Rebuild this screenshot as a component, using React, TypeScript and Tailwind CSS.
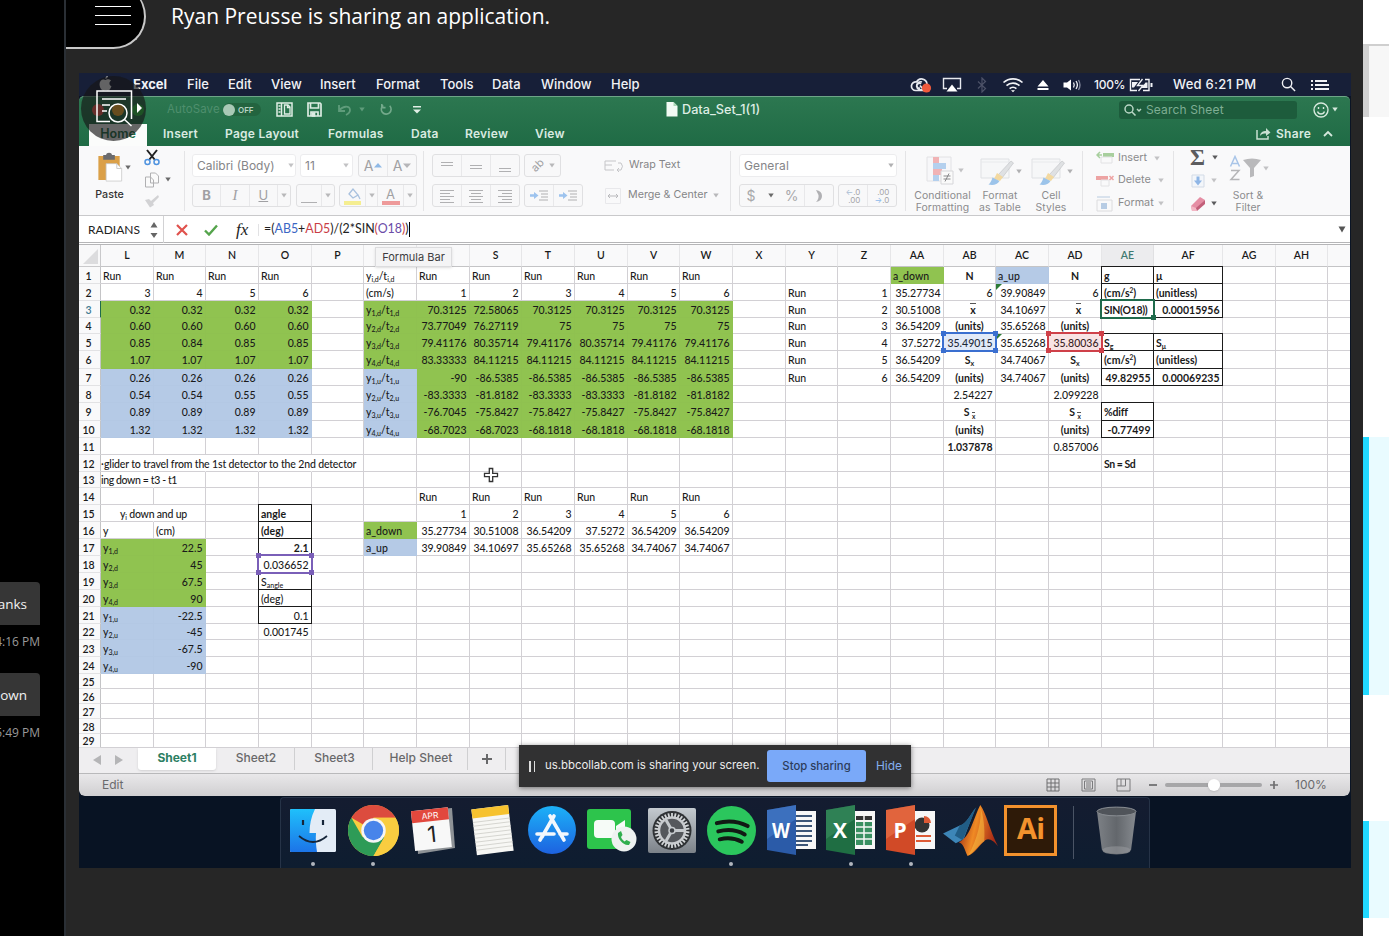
import React from "react";
import type { ReactNode } from "react";

/* ---------- small building blocks ---------- */

const Caret = ({ className = "text-[#8a8a8a]" }: { className?: string }) => (
  <svg viewBox="0 0 6 5" className={"h-[5px] w-[6px] shrink-0 " + className} fill="currentColor">
    <path d="M0.3 0.5h5.4L3 4.6z" />
  </svg>
);

const Gap = ({ className }: { className: string }) => <div className={"shrink-0 " + className} />;

/* ---------- menu bar ---------- */

const menuItems: [string, string][] = [
  ["File", "w-[41px]"],
  ["Edit", "w-[43px]"],
  ["View", "w-[49px]"],
  ["Insert", "w-[56px]"],
  ["Format", "w-[64px]"],
  ["Tools", "w-[52px]"],
  ["Data", "w-[49px]"],
  ["Window", "w-[70px]"],
  ["Help", "w-[40px]"],
];

function MenuBar() {
  return (
    <div className="flex h-[23px] shrink-0 items-center bg-[#171f38] pl-5 text-[13px] font-medium text-[#f1f2f6]">
      <svg viewBox="0 0 14 16" className="mb-[2px] h-[15px] w-[13px] shrink-0" fill="#f4f4f6">
        <path d="M9.5 0c.1 1.500-1.200 3-2.700 3C6.700 1.600 8 .2 9.500 0zM7 4.200c.8 0 1.500-.7 2.900-.7 1.300 0 2.400.6 3 1.600-2.500 1.500-2 4.900.5 5.900-.6 1.700-2 4.500-3.600 4.500-1 0-1.400-.6-2.700-.6s-1.700.6-2.700.6C2.600 15.500.6 12 .6 8.900.6 5.500 2.700 3.600 4.700 3.600c1.100 0 1.700.6 2.300.6z" />
      </svg>
      <span className="ml-[21px] w-[54px] shrink-0 font-bold">Excel</span>
      {menuItems.map(([t, w]) => (
        <span key={t} className={"shrink-0 whitespace-nowrap " + w}>{t}</span>
      ))}
      <div className="flex-1" />
      <svg viewBox="0 0 22 16" className="h-4 w-[22px] shrink-0" fill="none" stroke="#e6e8ee" strokeWidth="1.700">
        <path d="M6 13.500h9M6 13.500a4.300 4.300 0 1 1 .6-8.500A5.500 5.500 0 0 1 17 7" />
        <path d="M10 11a2.400 2.400 0 1 1 1-4M10 8.500l2 2.500M12 5a4 4 0 1 0 1 7" />
        <circle cx="16.500" cy="11" r="4.600" fill="#f05a3c" stroke="none" />
      </svg>
      <svg viewBox="0 0 20 16" className="ml-[10px] h-4 w-5 shrink-0" fill="none" stroke="#e6e8ee" strokeWidth="1.400">
        <path d="M5 11.500H1.500v-10h17v10H15" />
        <path d="M10 7.500l5.500 7h-11z" fill="#fff" stroke="none" />
      </svg>
      <svg viewBox="0 0 10 16" className="ml-[15px] h-4 w-[10px] shrink-0" fill="none" stroke="#4d5268" strokeWidth="1.200">
        <path d="M1 4.500l7.500 7L5 15V1l3.500 3.500L1 11.500" />
      </svg>
      <svg viewBox="0 0 22 16" className="ml-[15px] h-4 w-[22px] shrink-0" fill="none" stroke="#f1f2f6" strokeWidth="1.700">
        <path d="M1.500 5.500a14 14 0 0 1 19 0M4.500 8.700a9.500 9.500 0 0 1 13 0M7.600 11.600a5 5 0 0 1 6.800 0" />
        <path d="M9 13.200h4l-2 2z" fill="#fff" stroke="none" />
      </svg>
      <svg viewBox="0 0 12 12" className="ml-[13px] h-3 w-3 shrink-0" fill="#fff">
        <path d="M6 1l5.500 6.500H.5zM.5 9h11v2H.5z" />
      </svg>
      <svg viewBox="0 0 18 14" className="ml-[14px] h-[14px] w-[18px] shrink-0" fill="none" stroke="#f1f2f6" strokeWidth="1.300">
        <path d="M0.500 4.500h3.500L8 1.500v11L4 9.500H.5z" fill="#fff" stroke="none" />
        <path d="M10.500 4.500q1.500 2.500 0 5M13 3q2.800 4 0 8" />
        <path d="M15.500 2q3 5 0 10" stroke="#878ca0" />
      </svg>
      <span className="ml-[13px] w-[35px] text-[12px] tracking-[-0.3px]">100%</span>
      <svg viewBox="0 0 24 14" className="h-[14px] w-6 shrink-0" fill="none" stroke="#f1f2f6" strokeWidth="1.400">
        <path d="M11 1.500H1.500v11H8M14 12.500h6v-11h-4" />
        <path d="M22.500 5v4" strokeWidth="2" />
        <path d="M3 4h6L5 9.500H3zM18.500 10h-6l4-5.500h2z" fill="#f1f2f6" stroke="none" />
        <path d="M13.500 1L8.500 7.500h5.500L9.500 13" strokeWidth="1.300" />
      </svg>
      <span className="ml-5 w-[108px] whitespace-nowrap text-[13px] tracking-[0.25px]">Wed 6:21 PM</span>
      <svg viewBox="0 0 16 16" className="h-[15px] w-[15px] shrink-0" fill="none" stroke="#f1f2f6" strokeWidth="1.500">
        <circle cx="6.500" cy="6.500" r="5" />
        <path d="M10.200 10.200L15 15" />
      </svg>
      <svg viewBox="0 0 18 12" className="ml-[15px] mr-[22px] h-3 w-[18px] shrink-0" fill="#f1f2f6">
        <path d="M0 1h2v2H0zM0 5h2v2H0zM0 9h2v2H0zM4 1h12v2H4zM4 5h14v2H4zM4 9h14v2H4z" />
      </svg>
    </div>
  );
}

/* ---------- title bar and ribbon tabs ---------- */

const tabs: [string, string][] = [
  ["Insert", "w-[62px]"],
  ["Page Layout", "w-[103px]"],
  ["Formulas", "w-[83px]"],
  ["Data", "w-[54px]"],
  ["Review", "w-[70px]"],
  ["View", "w-[40px]"],
];

function TitleBar() {
  return (
    <div className="flex h-[50px] shrink-0 flex-col rounded-t-[5px] border-t border-[#6da587] bg-gradient-to-b from-[#2c7750] to-[#1f6b45]">
      <div className="flex h-[25px] items-center pl-[13px]">
        <div className="flex w-[75px] gap-2">
          <div className="size-3 rounded-full bg-[#ff5a50]" />
          <div className="size-3 rounded-full bg-[#ffb52e]" />
          <div className="size-3 rounded-full bg-[#2bc440]" />
        </div>
        <span className="w-[56px] text-[11.500px] tracking-[0.1px] text-[#4f8f6d]">AutoSave</span>
        <div className="flex h-[13px] w-[38px] items-center rounded-full bg-[#23643f]">
          <div className="size-3 rounded-full bg-[#a9c9b6]" />
          <span className="ml-[3px] text-[8px] font-semibold text-[#b9d3c4]">OFF</span>
        </div>
        <svg viewBox="0 0 17 15" className="ml-[15px] h-[15px] w-[17px]" fill="none" stroke="#e1efe6" strokeWidth="1.500">
          <path d="M1 1h15v13H1zM5.500 1v13" />
          <path d="M8.500 3h3.500l2 2v7H8.500zM11.500 3v2.500H14" strokeWidth="1.300" />
          <path d="M2.500 4h2M2.500 7h2M2.500 10h2" />
        </svg>
        <svg viewBox="0 0 15 15" className="ml-[14px] h-[15px] w-[15px]" fill="none" stroke="#dcebe2" strokeWidth="1.700">
          <path d="M1 1h12l1 1v12H1zM3.500 1v5h8V1M4 14v-4h7v4" />
          <path d="M5.500 11h2v3h-2z" fill="#dcebe2" />
        </svg>
        <svg viewBox="0 0 16 12" className="ml-[15px] h-3 w-4" fill="none" stroke="#5f9c7b" strokeWidth="1.800">
          <path d="M2 1v6h6M2 7c3-5 11-6 11-1 0 2-2 4-4 5" />
        </svg>
        <Caret className="ml-[6px] text-[#5f9c7b]" />
        <svg viewBox="0 0 14 14" className="ml-[14px] h-[13px] w-[14px]" fill="none" stroke="#73a98b" strokeWidth="1.700">
          <path d="M11 3A5.300 5.300 0 1 1 4 2.500M2.500 1v4h4" />
        </svg>
        <svg viewBox="0 0 8 8" className="ml-[20px] h-2 w-2" fill="#e1efe6">
          <path d="M0 0h8v1.500H0zM0 3.500h8L4 7.500z" />
        </svg>
        <svg viewBox="0 0 12 15" className="ml-[245px] h-[15px] w-3">
          <path d="M0.500 0h7L11.500 4v10.500H.5z" fill="#f2fbf4" />
          <path d="M7.500 0v4h4z" fill="#a9d8b6" />
        </svg>
        <span className="ml-[4px] w-[90px] text-[12.700px] font-medium text-[#deede4]">Data_Set_1(1)</span>
        <div className="flex-1" />
        <div className="flex h-[18px] w-[178px] items-center rounded-[3px] bg-[#1d5c3c] pl-[5px]">
          <svg viewBox="0 0 18 12" className="h-3 w-[18px]" fill="none" stroke="#b9d6c5" strokeWidth="1.500">
            <circle cx="5" cy="5" r="4" />
            <path d="M8 8l3.500 3.500M13 5l2 2 2-2" />
          </svg>
          <span className="ml-1 text-[12px] tracking-[0.15px] text-[#7fae94]">Search Sheet</span>
        </div>
        <svg viewBox="0 0 16 16" className="ml-4 h-4 w-4" fill="none" stroke="#d5e8dc" strokeWidth="1.400">
          <circle cx="8" cy="8" r="7" />
          <path d="M4.500 9.500a3.700 3.700 0 0 0 7 0M5.500 5v2M10.500 5v2" />
        </svg>
        <Caret className="ml-[3px] mr-[12px] text-[#d5e8dc]" />
      </div>
      <div className="flex h-[24px] items-center pb-px pl-[10px] text-[12px] font-semibold text-[#d9eae0]">
        <div className="-mb-px mr-[16px] flex h-[22px] w-[58px] items-center justify-center self-end bg-[#fbfcfb] pb-[2px] text-[12.500px] text-[#237049]">Home</div>
        {tabs.map(([t, w]) => (
          <span key={t} className={"shrink-0 whitespace-nowrap tracking-[0.25px] " + w}>{t}</span>
        ))}
        <div className="flex-1" />
        <svg viewBox="0 0 15 13" className="h-[13px] w-[15px]" fill="none" stroke="#c9e0d2" strokeWidth="1.500">
          <path d="M1 3v9h11V9" />
          <path d="M4 9c.5-4 3-5 6-5V1l4.500 4.500L10 9V6.500C7 6.500 5.500 7 4 9z" fill="#c9e0d2" stroke="none" />
        </svg>
        <span className="ml-[5px] w-[47px] tracking-[0.3px]">Share</span>
        <svg viewBox="0 0 10 7" className="mr-[17px] h-[7px] w-[10px]" fill="none" stroke="#d5e8dc" strokeWidth="1.800">
          <path d="M1 6l4-4 4 4" />
        </svg>
      </div>
    </div>
  );
}

/* ---------- ribbon ---------- */

const Box = ({ className, children }: { className: string; children?: ReactNode }) => (
  <div className={"flex h-[23px] shrink-0 items-center rounded-[3px] border border-[#e0e0e2] bg-[#f8f8f9] text-[#a0a0a3] " + className}>{children}</div>
);

const Part = ({ className = "flex-1", children }: { className?: string; children?: ReactNode }) => (
  <div className={"flex h-full items-center justify-center border-r border-[#e8e8ea] last:border-r-0 " + className}>{children}</div>
);

const Lines = ({ d, color = "#b0b0b2" }: { d: string; color?: string }) => (
  <svg viewBox="0 0 16 16" className="h-4 w-4" fill="none" stroke={color} strokeWidth="1"><path d={d} /></svg>
);

const Sep = () => <div className="h-[60px] w-px shrink-0 self-center bg-[#e4e4e6]" />;

const Rows = ({ className, children }: { className: string; children: ReactNode }) => (
  <div className={"flex shrink-0 flex-col gap-[7px] pt-2 " + className}>{children}</div>
);

function Brush() {
  return (
    <svg viewBox="0 0 34 30" className="h-[30px] w-[34px]" fill="none">
      <path d="M1 3h28v19H1z" fill="#f6f7f8" stroke="#dfe1e4" />
      <path d="M1 6h28" stroke="#e8eaec" />
      <path d="M31 5l2.500 2L22 22l-4-3z" fill="#dfe1e3" stroke="#c4c6c8" strokeWidth=".7" />
      <path d="M17 17l6 4-3 4-6-2z" fill="#f3d9a0" />
      <path d="M12.500 21.500l7 3.500c-2 4-7 4.500-11 3.500 2-1.500 3-4 4-7z" fill="#9cc4ea" />
    </svg>
  );
}

const IndentIcon = () => (
  <svg viewBox="0 0 20 14" className="h-[14px] w-5" fill="none" stroke="#b0b0b2">
    <path d="M10 2h9M12 5h7M12 8h7M10 11h9" />
    <path d="M1 6.500h6" stroke="#9dc3ee" strokeWidth="2.500" />
    <path d="M5 3l4.500 3.500L5 10z" fill="#9dc3ee" stroke="none" />
  </svg>
);

const StyleLabel = ({ a, b }: { a: string; b: string }) => (
  <div className="mt-[5px] whitespace-nowrap text-center text-[10.400px] leading-[12px] tracking-[0.1px] text-[#8b8b8d]">{a}<br />{b}</div>
);

function Ribbon() {
  return (
    <div className="flex h-[70px] shrink-0 border-b border-[#c9c9cb] bg-[#f9f9fa] font-[Inter,sans-serif]">
      {/* clipboard */}
      <div className="flex w-[105px] shrink-0 pl-3">
        <div className="flex w-[37px] flex-col items-center pt-[6px]">
          <svg viewBox="0 0 26 32" className="h-[31px] w-[26px]">
            <path d="M1 4h22v25H1z" fill="#dba048" />
            <path d="M6 3h3c0-3 6-3 6 0h3v5H6z" fill="#6b6b6d" />
            <path d="M9 12h11l5 5v13H9z" fill="#fff" stroke="#c8c8c8" strokeWidth=".8" />
            <path d="M20 12v5h5" fill="none" stroke="#c8c8c8" />
          </svg>
          <span className="mt-[5px] text-[10.700px] font-medium leading-[14px] text-[#333]">Paste</span>
        </div>
        <div className="-ml-[3px] pt-[19px]"><Caret className="text-[#6a6a6a]" /></div>
        <div className="ml-[13px] flex w-4 flex-col items-center gap-[6px] pt-[3px]">
          <svg viewBox="0 0 16 17" className="h-[17px] w-4" fill="none" strokeWidth="2">
            <path d="M3 1l8 10M13 1L5 11" stroke="#222" />
            <circle cx="3.500" cy="13" r="2.500" stroke="#4f93df" strokeWidth="1.500" />
            <circle cx="12.500" cy="13" r="2.500" stroke="#4f93df" strokeWidth="1.500" />
          </svg>
          <svg viewBox="0 0 16 16" className="h-4 w-4" fill="#fafafa" stroke="#b0b0b2">
            <path d="M6.500 1h5l3 3v7h-8zM1.500 5h5l3 3v7h-8z" />
          </svg>
          <svg viewBox="0 0 16 14" className="h-[14px] w-4" fill="#d2d2d4">
            <path d="M1 6l4-1 2 2 7-6 1 2-6 6 1 2-4 2.500z" />
          </svg>
        </div>
        <div className="ml-[5px] pt-[31px]"><Caret className="text-[#6a6a6a]" /></div>
      </div>
      <Sep />
      {/* font */}
      <Rows className="w-[238px] pl-[7px]">
        <div className="flex">
          <Box className="w-[104px] border-[#ececee] bg-white pl-1 text-[12px]"><span className="w-[91px] text-[#858588]">Calibri (Body)</span><Caret className="text-[#c2c2c4]" /></Box>
          <Box className="ml-1 w-[53px] border-[#ececee] bg-white pl-1 text-[12px]"><span className="w-[38px] text-[#858588]">11</span><Caret className="text-[#c2c2c4]" /></Box>
          <Box className="ml-[5px] w-[59px] text-[14px]">
            <Part>A
              <svg viewBox="0 0 8 5" className="ml-px h-[5px] w-2" fill="#8fb9e6"><path d="M0 4.500h8L4 0z" /></svg>
            </Part>
            <Part>A
              <svg viewBox="0 0 8 5" className="ml-px h-[5px] w-2" fill="#b6b6b9"><path d="M0 .5h8L4 5z" /></svg>
            </Part>
          </Box>
        </div>
        <div className="flex">
          <Box className="w-[99px] text-[13px]">
            <Part><b>B</b></Part>
            <Part><i className="font-['Liberation_Serif',serif] text-[15px]">I</i></Part>
            <Part><u>U</u></Part>
            <Part className="w-3"><Caret className="text-[#b8b8ba]" /></Part>
          </Box>
          <Box className="ml-[5px] w-[39px]">
            <Part><Lines d="M0 14.500h16" /></Part>
            <Part className="w-3"><Caret className="text-[#b8b8ba]" /></Part>
          </Box>
          <Box className="ml-1 w-[78px]">
            <Part>
              <svg viewBox="0 0 18 18" className="h-[18px] w-[18px]" fill="none">
                <path d="M5 7l4-5 5 6-5 3zM14 8l2 4" stroke="#a9c1de" strokeWidth="1.300" />
                <path d="M0 14h17v4H0z" fill="#f5ee91" />
              </svg>
            </Part>
            <Part className="w-3"><Caret className="text-[#b8b8ba]" /></Part>
            <Part>
              <div className="flex flex-col items-center"><span className="text-[13px] leading-[14px]">A</span><div className="h-1 w-[18px] bg-[#ee9a9a]" /></div>
            </Part>
            <Part className="w-3"><Caret className="text-[#b8b8ba]" /></Part>
          </Box>
        </div>
      </Rows>
      <Sep />
      {/* alignment */}
      <Rows className="w-[160px] pl-2">
        <div className="flex">
          <Box className="w-[88px]">
            <Part><Lines d="M2 4.500h12M2 7.500h12" /></Part>
            <Part><Lines d="M2 7.500h12M2 10.500h12" /></Part>
            <Part><Lines d="M2 10.500h12M2 13.500h12" /></Part>
          </Box>
          <Box className="ml-1 w-[37px]">
            <div className="flex w-6 items-center justify-center"><span className="-rotate-45 text-[11px]">ab</span></div><Caret className="text-[#b8b8ba]" />
          </Box>
        </div>
        <div className="flex">
          <Box className="w-[88px]">
            <Part><Lines d="M1 2.500h14M1 5.500h10M1 8.500h14M1 11.500h10M1 14.500h14" /></Part>
            <Part><Lines d="M1 2.500h14M3 5.500h10M1 8.500h14M3 11.500h10M1 14.500h14" /></Part>
            <Part><Lines d="M1 2.500h14M5 5.500h10M1 8.500h14M5 11.500h10M1 14.500h14" /></Part>
          </Box>
          <Box className="ml-1 w-[59px]"><Part><IndentIcon /></Part><Part><IndentIcon /></Part></Box>
        </div>
      </Rows>
      <div className="flex w-[146px] shrink-0 flex-col gap-[7px] pl-[20px] pt-2 text-[10.700px] text-[#858587]">
        <div className="flex h-[23px] items-center gap-[5px]">
          <svg viewBox="0 0 20 14" className="h-[14px] w-5" fill="none" stroke="#c5c5c8"><path d="M1 2h11M1 6h7M1 11h9M1 2v9M14 4h3q3 3 0 7h-4M15 9l-2 2 2 2" /></svg>
          <span className="whitespace-nowrap">Wrap Text</span>
        </div>
        <div className="flex h-[23px] items-center">
          <svg viewBox="0 0 16 16" className="ml-[1px] h-4 w-4" fill="none" stroke="#b9b9bc"><path d="M.5.5h15v15H.5z" stroke="#e8e8eb" /><path d="M3 8h10M5 6L3 8l2 2M11 6l2 2-2 2" /></svg>
          <span className="ml-[7px] mr-[6px] whitespace-nowrap">Merge &amp; Center</span>
          <Caret className="text-[#b8b8ba]" />
        </div>
      </div>
      <Sep />
      {/* number */}
      <Rows className="w-[174px] pl-2">
        <Box className="w-[158px] border-[#ececee] bg-white pl-1 text-[12px]"><span className="w-[144px] tracking-[0.1px] text-[#858588]">General</span><Caret className="text-[#b0b0b2]" /></Box>
        <div className="flex">
          <Box className="w-[95px] text-[14px] text-[#a8a8ab]">
            <Part className="w-[22px] border-r-0">$</Part>
            <div className="flex w-[17px] justify-center"><Caret className="text-[#6a6a6a]" /></div>
            <Part className="w-[26px]">%</Part>
            <Part>
              <svg viewBox="0 0 8 12" className="h-3 w-2" fill="#b0b0b3"><path d="M1 0q6 1 6 6t-6 6q3-3 2.500-7z" /></svg>
            </Part>
          </Box>
          <Box className="ml-1 w-[59px] text-[8px] leading-[8px] text-[#a5a5a8]">
            <Part><div className="text-right"><span className="text-[#a8bcd4]">←</span>.0<br />.00</div></Part>
            <Part><div className="text-right">.00<br /><span className="text-[#8db8ea]">→</span>.0</div></Part>
          </Box>
        </div>
      </Rows>
      <Sep />
      {/* styles */}
      <div className="flex w-[176px] shrink-0 pt-[10px]">
        <div className="flex w-[73px] flex-col items-center">
          <div className="flex items-center gap-[4px] pl-[4px]">
            <svg viewBox="0 0 28 29" className="h-[29px] w-[28px]">
              <path d="M1 1h24v24H1z" fill="#f7f7f9" stroke="#e2e2e5" />
              <path d="M7 1h6v6H7zM7 13h9v6H7z" fill="#f1b3b5" /><path d="M7 7h13v6H7zM7 19h6v6H7z" fill="#b4d0ee" />
              <path d="M15 15h12v13H15z" fill="#fafafa" stroke="#d6d6d9" />
              <path d="M17.500 20h7M17.500 23h7M23 17.500l-4 8" stroke="#88888a" />
            </svg>
            <Caret className="text-[#c2c2c4]" />
          </div>
          <StyleLabel a="Conditional" b="Formatting" />
        </div>
        <div className="flex w-[42px] flex-col items-center">
          <div className="flex items-center gap-[2px] pl-px"><Brush /><Caret className="text-[#b0b0b2]" /></div>
          <div className="-mt-px"><StyleLabel a="Format" b="as Table" /></div>
        </div>
        <div className="flex w-[60px] flex-col items-center">
          <div className="flex items-center gap-[2px] pl-[1px]"><Brush /><Caret className="text-[#b0b0b2]" /></div>
          <div className="-mt-px"><StyleLabel a="Cell" b="Styles" /></div>
        </div>
      </div>
      <Sep />
      {/* cells */}
      <div className="flex w-[90px] shrink-0 flex-col pl-[13px] pt-px text-[10.800px] text-[#8b8b8d]">
        <div className="flex h-[22px] items-center">
          <svg viewBox="0 0 18 14" className="h-[14px] w-[18px]" fill="none"><path d="M7 2h11v4H7z" fill="#a8cf9e" /><path d="M1 4h5M4 1L1 4l3 3" stroke="#a8cf9e" strokeWidth="1.500" /><path d="M5 6h11v6H5z" stroke="#e2e2e4" /></svg>
          <span className="ml-[4px] mr-[7px]">Insert</span><Caret className="text-[#c2c2c4]" />
        </div>
        <div className="flex h-[23px] items-center">
          <svg viewBox="0 0 18 14" className="h-[14px] w-[18px]" fill="none"><path d="M0 2h12v4H0z" fill="#eda3a3" /><path d="M13.500 2l4 4M17.500 2l-4 4" stroke="#eda3a3" strokeWidth="1.500" /><path d="M5 6h8v6H5z" stroke="#e2e2e4" /></svg>
          <span className="ml-[4px] mr-[7px]">Delete</span><Caret className="text-[#c2c2c4]" />
        </div>
        <div className="flex h-[23px] items-center">
          <svg viewBox="0 0 18 16" className="h-4 w-[18px]" fill="none"><path d="M1 1h13" stroke="#b8cbe0" /><path d="M1 4h15v11H1z" stroke="#dcdcde" /><path d="M5 7h6v6H5z" fill="#b7cce4" /></svg>
          <span className="ml-[4px] mr-1">Format</span><Caret className="text-[#c2c2c4]" />
        </div>
      </div>
      <Sep />
      {/* editing */}
      <div className="flex shrink-0 pl-4">
        <div className="flex w-[38px] flex-col">
          <div className="flex h-[23px] items-center gap-[7px]"><span className="font-['Liberation_Serif',serif] text-[23px] font-bold leading-[20px] text-[#5c5c5e]">Σ</span><Caret className="text-[#5a5a5c]" /></div>
          <div className="flex h-[23px] items-center gap-[5px]">
            <svg viewBox="0 0 16 14" className="h-[14px] w-4" fill="none"><path d="M2 1h12v12H2z" fill="#f3f6fa" stroke="#d3dbe6" /><path d="M8 2.500v5" stroke="#8fb6e6" strokeWidth="3" /><path d="M4 6.500h8L8 11.500z" fill="#8fb6e6" /></svg>
            <Caret className="text-[#c2c2c4]" />
          </div>
          <div className="flex h-[23px] items-center gap-[5px]">
            <svg viewBox="0 0 16 16" className="h-4 w-4"><path d="M1 10L10 1l5 3-8 9-5 2z" fill="#e58ea4" /><path d="M1 10l5 2 1 3H2z" fill="#f3b6c4" /><path d="M6 12l9-8v4l-8 7z" fill="#c25f79" /></svg>
            <Caret className="text-[#5a5a5c]" />
          </div>
        </div>
        <div className="flex w-[40px] flex-col items-center pt-[9px]">
          <div className="flex items-center pl-[1px]">
            <svg viewBox="0 0 12 26" className="h-[26px] w-3" fill="none" strokeWidth="1.500">
              <path d="M1.500 11.500L6 1.500l4.500 10M3 8.500h6" stroke="#a9c5e8" />
              <path d="M2 15.500h8l-8 9h8.500" stroke="#b5b5b7" />
            </svg>
            <svg viewBox="0 0 18 20" className="mx-[2px] h-5 w-[18px]" fill="#b9b9bb"><path d="M0 2q9-3 18 0l-7 8v8l-4 1.500V10z" /></svg>
            <Caret className="text-[#c2c2c4]" />
          </div>
          <div className="mt-[4px]"><StyleLabel a="Sort &" b="Filter" /></div>
        </div>
      </div>
    </div>
  );
}

/* ---------- formula bar ---------- */

function FormulaBar() {
  return (
    <div className="flex h-[29px] shrink-0 items-center border-b-[3px] border-double border-[#b5b5b7] bg-white pt-px font-[Lato,sans-serif] text-[13px] text-[#222]">
      <span className="w-[71px] pl-[9px] text-[12px]">RADIANS</span>
      <svg viewBox="0 0 8 18" className="h-[18px] w-2" fill="#666"><path d="M4 1l3.500 5.500h-7zM4 17l3.500-5h-7z" /></svg>
      <div className="ml-[5px] h-[27px] w-px bg-[#d2d2d4]" />
      <svg viewBox="0 0 12 12" className="ml-[12px] h-3 w-3" fill="none" stroke="#e0524d" strokeWidth="2.200"><path d="M1 1l10 10M11 1L1 11" /></svg>
      <svg viewBox="0 0 14 12" className="ml-4 h-3 w-[14px]" fill="none" stroke="#55a44c" strokeWidth="2.400"><path d="M1 6.500l4 4L13 1.500" /></svg>
      <span className="ml-[18px] w-[22px] font-['Liberation_Serif',serif] text-[17px] italic leading-[20px]">fx</span>
      <div className="h-3 w-px bg-[#e2e2e4]" />
      <span className="whitespace-nowrap pl-[5px] text-[12.400px]">
        =(<span className="text-[#3a66c4]">AB5</span>+<span className="text-[#c93d45]">AD5</span>)/(2*SIN<span className="text-[#c93d45]">(</span><span className="text-[#6b4ca8]">O18</span><span className="text-[#c93d45]">)</span>)
      </span>
      <div className="h-[15px] w-px bg-black" />
      <div className="flex-1" />
      <svg viewBox="0 0 8 7" className="mr-1 h-[7px] w-2" fill="#555"><path d="M.5.5h7L4 6.500z" /></svg>
    </div>
  );
}

/* ---------- spreadsheet ---------- */

type Cell = { v: ReactNode; a?: "l" | "r" | "c"; b?: boolean };

const cols = ["L", "M", "N", "O", "P", "Q", "R", "S", "T", "U", "V", "W", "X", "Y", "Z", "AA", "AB", "AC", "AD", "AE", "AF", "AG", "AH", ""];
const cells: Record<string, Cell> = {};
const fills: Record<string, "g" | "b"> = {};
const boxed = new Set<string>();

const put = (ref: string, v: ReactNode, a: "l" | "r" | "c" = "r", b = false) => { cells[ref] = { v, a, b }; };
const row = (start: string, r: number, values: string, a: "l" | "r" | "c" = "r") =>
  values.split(" ").forEach((v, i) => put(cols[cols.indexOf(start) + i] + r, v, a));
const range = (c1: string, r1: number, c2: string, r2: number, fn: (ref: string) => void) => {
  for (let c = cols.indexOf(c1); c <= cols.indexOf(c2); c++) for (let r = r1; r <= r2; r++) fn(cols[c] + r);
};
const Sub = ({ children }: { children: ReactNode }) => <span className="align-[-2px] text-[7px] leading-none">{children}</span>;

row("L", 1, "Run Run Run Run", "l");
row("L", 2, "3 4 5 6");
["0.32 0.32 0.32 0.32", "0.60 0.60 0.60 0.60", "0.85 0.84 0.85 0.85", "1.07 1.07 1.07 1.07", "0.26 0.26 0.26 0.26", "0.54 0.54 0.55 0.55", "0.89 0.89 0.89 0.89", "1.32 1.32 1.32 1.32"]
  .forEach((v, i) => row("L", i + 3, v));
put("Q1", <>y<Sub>i,d</Sub>/t<Sub>i,d</Sub></>, "l");
put("Q2", "(cm/s)", "l");
for (let i = 0; i < 8; i++) {
  const s = `${(i % 4) + 1},${i < 4 ? "d" : "u"}`;
  put("Q" + (i + 3), <>y<Sub>{s}</Sub>/t<Sub>{s}</Sub></>, "l");
  put("L" + (i + 17), <>y<Sub>{s}</Sub></>, "l");
}
row("M", 17, "22.5"); row("M", 18, "45"); row("M", 19, "67.5"); row("M", 20, "90");
row("M", 21, "-22.5"); row("M", 22, "-45"); row("M", 23, "-67.5"); row("M", 24, "-90");
row("R", 1, "Run Run Run Run Run Run", "l");
row("R", 2, "1 2 3 4 5 6");
[
  "70.3125 72.58065 70.3125 70.3125 70.3125 70.3125",
  "73.77049 76.27119 75 75 75 75",
  "79.41176 80.35714 79.41176 80.35714 79.41176 79.41176",
  "83.33333 84.11215 84.11215 84.11215 84.11215 84.11215",
  "-90 -86.5385 -86.5385 -86.5385 -86.5385 -86.5385",
  "-83.3333 -81.8182 -83.3333 -83.3333 -81.8182 -81.8182",
  "-76.7045 -75.8427 -75.8427 -75.8427 -75.8427 -75.8427",
  "-68.7023 -68.7023 -68.1818 -68.1818 -68.1818 -68.1818",
].forEach((v, i) => row("R", i + 3, v));
put("L12", <span className="tracking-[-0.150px]"><span className="-ml-[2px] inline-block w-[3px] overflow-hidden align-bottom">·</span>glider to travel from the 1st detector to the 2nd detector</span>, "l");
put("L13", <span className="-ml-[2px] tracking-[-0.380px]">ing down = t3 - t1</span>, "l");
put("L15", <span className="ml-[17px] tracking-[-0.200px]">y<Sub>i</Sub> down and up</span>, "l");
put("L16", "y", "l"); put("M16", "(cm)", "l");
put("O15", "angle", "l", true); put("O16", "(deg)", "l", true); put("O17", "2.1", "r", true);
put("O18", "0.036652"); put("O19", <>S<Sub>angle</Sub></>, "l"); put("O20", "(deg)", "l"); put("O21", "0.1"); put("O22", "0.001745");
row("R", 14, "Run Run Run Run Run Run", "l");
row("R", 15, "1 2 3 4 5 6");
put("Q16", "a_down", "l"); put("Q17", "a_up", "l");
row("R", 16, "35.27734 30.51008 36.54209 37.5272 36.54209 36.54209");
row("R", 17, "39.90849 34.10697 35.65268 35.65268 34.74067 34.74067");
["35.27734", "30.51008", "36.54209", "37.5272", "36.54209", "36.54209"].forEach((v, i) => {
  put("Y" + (i + 2), "Run", "l"); put("Z" + (i + 2), String(i + 1)); put("AA" + (i + 2), v);
});
["39.90849", "34.10697", "35.65268", "35.65268", "34.74067", "34.74067"].forEach((v, i) => put("AC" + (i + 2), v));
put("AA1", "a_down", "l"); put("AC1", "a_up", "l");
["AB", "AD"].forEach((c) => {
  put(c + 1, "N", "c", true);
  put(c + 2, "6");
  put(c + 3, <span className="ml-[7px] inline-block border-t border-[#555] leading-[13px]">x</span>, "c", true);
  put(c + 4, "(units)", "c", true);
  put(c + 6, <>S<Sub>x</Sub></>, "c", true);
  put(c + 7, "(units)", "c", true);
  put(c + 9, <>S <span className="inline-block border-t border-[#555] align-[-3px] text-[6.500px] leading-[7px]">x</span></>, "c", true);
  put(c + 10, "(units)", "c", true);
});
put("AB5", "35.49015"); put("AD5", "35.80036"); put("AB8", "2.54227"); put("AD8", "2.099228");
put("AB11", "1.037878", "r", true); put("AD11", "0.857006");
const Cms2 = () => <>(cm/s<span className="align-[4px] text-[6.500px] leading-none">2</span>)</>;
put("AE1", "g", "l", true); put("AF1", "μ", "l", true);
put("AE2", <Cms2 />, "l", true); put("AF2", "(unitless)", "l", true);
put("AE3", <span className="tracking-[-0.300px]">SIN(O18))</span>, "l", true); put("AF3", "0.00015956", "r", true);
put("AE5", <>S<Sub>g</Sub></>, "l", true); put("AF5", <>S<Sub>μ</Sub></>, "l", true);
put("AE6", <Cms2 />, "l", true); put("AF6", "(unitless)", "l", true);
put("AE7", "49.82955", "r", true); put("AF7", "0.00069235", "r", true);
put("AE9", <span className="tracking-[-0.200px]">%diff</span>, "l", true); put("AE10", "-0.77499", "r", true);
put("AE12", <span className="tracking-[-0.450px]">Sn = Sd</span>, "l", true);

range("L", 3, "O", 6, (k) => { fills[k] = "g"; });
range("L", 7, "O", 10, (k) => { fills[k] = "b"; });
range("Q", 3, "Q", 6, (k) => { fills[k] = "g"; });
range("Q", 7, "Q", 10, (k) => { fills[k] = "b"; });
range("R", 3, "W", 10, (k) => { fills[k] = "g"; });
range("L", 17, "M", 20, (k) => { fills[k] = "g"; });
range("L", 21, "M", 24, (k) => { fills[k] = "b"; });
fills.Q16 = "g"; fills.Q17 = "b"; fills.AA1 = "g"; fills.AC1 = "b";
range("O", 15, "O", 17, (k) => { boxed.add(k); });
range("O", 19, "O", 21, (k) => { boxed.add(k); });
range("AE", 1, "AF", 3, (k) => { boxed.add(k); });
range("AE", 5, "AF", 7, (k) => { boxed.add(k); });
boxed.add("AE9"); boxed.add("AE10");
const openRight = new Set(["L12", "M12", "N12", "O12", "L13", "L15"]);

const Selection = ({ frame, dot }: { frame: string; dot: string }) => (
  <div className={"absolute -inset-[2px] z-20 border-2 " + frame}>
    <div className={"absolute -left-[3px] -top-[3px] size-[5px] " + dot} />
    <div className={"absolute -right-[3px] -top-[3px] size-[5px] " + dot} />
    <div className={"absolute -bottom-[3px] -left-[3px] size-[5px] " + dot} />
    <div className={"absolute -bottom-[3px] -right-[3px] size-[5px] " + dot} />
  </div>
);

function overlay(ref: string) {
  if (ref === "AB5") return <Selection frame="border-[#3a6fd0] bg-[#3a6fd0]/15" dot="bg-[#3a6fd0]" />;
  if (ref === "AD5") return <Selection frame="border-[#cf4049] bg-[#cf4049]/15" dot="bg-[#cf4049]" />;
  if (ref === "O18") return <Selection frame="border-[#7a5fb8]" dot="bg-[#7a5fb8]" />;
  if (ref === "AE3")
    return (
      <div className="absolute -inset-[2px] z-20 border-2 border-[#1f6b4c]">
        <div className="absolute -bottom-[3px] -right-[3px] size-[5px] bg-[#1f6b4c]" />
      </div>
    );
  if (ref === "AC2" || ref === "AC5")
    return <svg viewBox="0 0 6 6" className="absolute left-0 top-0 size-[6px]" fill="#2b7a35"><path d="M0 0h6L0 6z" /></svg>;
  return null;
}

const rowTemplate =
  "grid-rows-[22px_17px_17px_17px_16px_17px_18px_17px_17px_18px_17px_17px_17px_16px_17px_17px_17px_17px_17px_17px_17px_17px_16px_17px_17px_15px_15px_15px_15px_14px]";
const colTemplate =
  "grid-cols-[22px_53px_52px_53px_53px_52px_53px_53px_52px_53px_53px_52px_53px_53px_52px_53px_53px_52px_53px_53px_52px_69px_53px_52px_23px]";

const justify = { l: "justify-start pl-[2px]", r: "justify-end pr-[2.500px]", c: "justify-center" };

function Sheet() {
  return (
    <div className={"grid shrink-0 bg-white font-[Lato,sans-serif] text-[10.500px] text-[#1a1a1a] " + rowTemplate + " " + colTemplate}>
      <div className="flex items-end justify-end border-b border-r border-[#c9c9cb] bg-[#f8f8f9] p-[2px]">
        <svg viewBox="0 0 15 15" className="size-[15px]" fill="#dcdcde"><path d="M15 0v15H0z" /></svg>
      </div>
      {cols.map((c) => (
        <div
          key={"h" + c}
          className={"flex items-center justify-center border-b border-r pt-px text-[10.500px] font-semibold " + (c === "AE" ? "border-b-[#1f6b4c] border-r-[#e0e0e2] bg-[#ececee] text-[#3f7a70]" : "border-b-[#c4c4c6] border-r-[#e6e6e8] bg-[#f9f9fa]")}
        >
          {c === "Q" || c === "R" ? null : c}
        </div>
      ))}
      {Array.from({ length: 29 }, (_, i) => i + 1).map((r) => (
        <React.Fragment key={r}>
          <div className={"flex items-center justify-center border-b border-r border-b-[#e2e2e4] bg-[#f9f9fa] pr-[2px] pt-px text-[10.500px] font-semibold leading-[14px] " + (r === 3 ? "border-r-[#1f6b4c] text-[#3f7a90]" : "border-r-[#c4c4c6]")}>{r}</div>
          {cols.map((c) => {
            const ref = c + r;
            const cell = cells[ref];
            const f = fills[ref];
            const tone = f === "g" ? "bg-[#90c350] border-[#8fc150]" : f === "b" ? "bg-[#b5cae6] border-[#b3c8e4]" : openRight.has(ref) ? "border-b-[#d2d0d4] border-r-transparent" : "border-[#d2d0d4]";
            return (
              <div key={ref} className={"relative flex min-w-0 items-center whitespace-nowrap border-b border-r pt-px leading-[14px] " + tone + " " + (cell ? justify[cell.a ?? "r"] : "") + (cell?.b ? " font-bold" : " font-medium")}>
                {cell && <span className="shrink-0">{cell.v}</span>}
                {boxed.has(ref) && <div className="absolute -inset-px z-10 border border-[#1b1b1b]" />}
                {overlay(ref)}
              </div>
            );
          })}
        </React.Fragment>
      ))}
    </div>
  );
}

/* ---------- sheet tabs and status bar ---------- */

function SheetTabs() {
  return (
    <div className="flex h-[26px] shrink-0 items-start border-b border-[#b9b9bb] bg-[#efeef0] text-[12px] text-[#68686a]">
      <div className="flex h-6 w-[59px] items-center gap-[14px] pl-[14px]">
        <svg viewBox="0 0 8 10" className="h-[10px] w-2" fill="#b5b5b7"><path d="M8 0v10L0 5z" /></svg>
        <svg viewBox="0 0 8 10" className="h-[10px] w-2" fill="#b5b5b7"><path d="M0 0v10l8-5z" /></svg>
      </div>
      <div className="flex h-[22px] w-[78px] items-center justify-center rounded-b-[3px] bg-white pb-[3px] font-bold text-[#2c8063] shadow-sm">Sheet1</div>
      {[["Sheet2", "w-[79px]"], ["Sheet3", "w-[78px]"], ["Help Sheet", "w-[95px]"]].map(([t, w]) => (
        <div key={t} className={"flex h-[22px] items-center justify-center border-r border-[#cfcfd1] pb-[3px] pl-[2px] font-medium " + w}>{t}</div>
      ))}
      <div className="flex h-[22px] w-[38px] items-center justify-center border-r border-[#cfcfd1]">
        <svg viewBox="0 0 10 10" className="size-[10px]" stroke="#68686a" strokeWidth="2"><path d="M5 0v10M0 5h10" /></svg>
      </div>
    </div>
  );
}

function StatusBar() {
  return (
    <div className="flex h-[22px] flex-1 items-center rounded-b-[5px] bg-gradient-to-b from-[#e9e8ea] to-[#d0cfd1] pl-[23px] text-[12px] text-[#6a6a6c]">
      <span>Edit</span>
      <div className="flex-1" />
      <svg viewBox="0 0 14 14" className="size-[14px]" fill="none" stroke="#6f6f71"><path d="M1 1h12v12H1zM5 1v12M9 1v12M1 5h12M1 9h12" /></svg>
      <svg viewBox="0 0 15 14" className="ml-[21px] h-[14px] w-[15px]" fill="none" stroke="#7b7b7d"><path d="M1 1h13v12H1zM3.500 3h8v8h-8zM5 5h5M5 7h5M5 9h5" /></svg>
      <svg viewBox="0 0 15 14" className="ml-[20px] h-[14px] w-[15px]" fill="none" stroke="#7b7b7d"><path d="M1 1h13v12H1zM5 1v7M9.500 1v7H1" /></svg>
      <div className="ml-[18px] h-[2px] w-[8px] bg-[#7b7b7d]" />
      <div className="ml-2 flex h-3 w-[97px] items-center justify-center rounded-full">
        <div className="h-1 w-[43px] rounded-l-full bg-[#a6a6a8]" />
        <div className="size-[12px] shrink-0 rounded-full bg-white shadow" />
        <div className="h-1 w-[42px] rounded-r-full bg-[#a6a6a8]" />
      </div>
      <svg viewBox="0 0 8 8" className="ml-2 size-2" stroke="#6f6f71" strokeWidth="1.700"><path d="M4 0v8M0 4h8" /></svg>
      <span className="ml-[17px] mr-[24px] w-[31px]">100%</span>
    </div>
  );
}

/* ---------- dock ---------- */

function OfficeIcon({ letter, dark, light, children }: { letter: string; dark: string; light: string; children: ReactNode }) {
  return (
    <svg viewBox="0 0 50 50" className="size-[50px]">
      <path d="M24 6h25v38H24z" fill="#f7f7f7" />
      {children}
      <path d="M0 5L29 0v50L0 45z" fill={dark} />
      <path d="M0 5L29 0v14L0 34z" fill={light} opacity=".55" />
      <text x="14" y="33" textAnchor="middle" fontFamily="Open Sans, sans-serif" fontSize="21" fontWeight="700" textLength={letter === "W" ? 18 : undefined} lengthAdjust="spacingAndGlyphs" fill="#fff">{letter}</text>
    </svg>
  );
}

const gearTeeth = Array.from({ length: 30 }, (_, i) => i * 12);

const dockIcons: { el: ReactNode; running?: boolean }[] = [
  {
    running: true,
    el: (
      <svg viewBox="0 0 46 43" className="h-[43px] w-[46px]">
        <defs><linearGradient id="fd" x2="0" y2="1"><stop stopColor="#1fc0fb" /><stop offset="1" stopColor="#1c74e8" /></linearGradient></defs>
        <rect width="46" height="43" rx="1.500" fill="#e3ecf6" />
        <path d="M1.500 0H25c-4 8-5.500 16-5.500 24H26c-.5 6 0 13 1 19H1.500Q0 43 0 41.500v-40Q0 0 1.500 0z" fill="url(#fd)" />
        <path d="M13 11v5M33 11v5" stroke="#16263a" strokeWidth="2.200" />
        <path d="M9 27q14 12 28 0" fill="none" stroke="#16263a" strokeWidth="1.700" />
      </svg>
    ),
  },
  {
    running: true,
    el: (
      <svg viewBox="0 0 50 50" className="size-[51px]">
        <circle cx="25" cy="25" r="25" fill="#f9cd40" />
        <path d="M25 25L3.350 12.500A25 25 0 0 1 46.650 12.500H25z" fill="#dc4c3e" />
        <path d="M3.350 12.500A25 25 0 0 0 25 50l10.800-18.700L25 25l-10.800 6.300z" fill="#2e9b57" />
        <path d="M46.650 12.500H25v12.500l10.800 6.300L25 50A25 25 0 0 0 46.650 12.500z" fill="#f9cd40" />
        <circle cx="25" cy="25" r="12" fill="#f5f5f5" />
        <circle cx="25" cy="25" r="9.500" fill="#4884ea" />
      </svg>
    ),
  },
  {
    el: (
      <svg viewBox="0 0 46 50" className="h-[50px] w-[46px]">
        <path d="M6 6l36-3 3 40-37 6z" fill="#8e9296" />
        <g transform="rotate(-6 23 25)">
          <rect x="3" y="4" width="37" height="40" fill="#f8f8f8" />
          <rect x="3" y="4" width="37" height="12" fill="#e2483d" />
          <text x="21.500" y="13.500" textAnchor="middle" fontFamily="Inter, sans-serif" fontSize="8.500" fill="#fff">APR</text>
          <text x="21.500" y="37" textAnchor="middle" fontFamily="Inter, sans-serif" fontSize="22" fill="#222">1</text>
        </g>
      </svg>
    ),
  },
  {
    el: (
      <svg viewBox="0 0 46 52" className="h-[52px] w-[46px]">
        <g transform="rotate(-7 23 26)">
          <rect x="4" y="3" width="37" height="46" fill="#f7f7f4" />
          <rect x="4" y="3" width="37" height="9" fill="#f6c22f" />
          <path d="M4 16h37M4 20h37M4 24h37M4 28h37M4 32h37M4 36h37M4 40h37M4 44h37" stroke="#d5d5d0" strokeWidth="1" />
        </g>
      </svg>
    ),
  },
  {
    el: (
      <svg viewBox="0 0 48 48" className="size-[48px]">
        <defs><linearGradient id="as" x2="0" y2="1"><stop stopColor="#1cb1f8" /><stop offset="1" stopColor="#1d62e0" /></linearGradient></defs>
        <circle cx="24" cy="24" r="24" fill="url(#as)" />
        <path d="M26 10L14 31M22 10l14 24M9 28h17M32 28h7M12 34l1.500-2.500" stroke="#f3f8fd" strokeWidth="3.600" strokeLinecap="round" fill="none" />
      </svg>
    ),
  },
  {
    el: (
      <svg viewBox="0 0 50 43" className="h-[43px] w-[50px]">
        <rect width="44" height="40" rx="3" fill="#2dc44c" />
        <rect x="7" y="11" width="21" height="18" rx="4" fill="#f6fbf7" />
        <path d="M29 17l9-6v18l-9-5z" fill="#f6fbf7" />
        <circle cx="37" cy="30" r="12.500" fill="#eef2f1" />
        <path d="M31 24c-1 5 5 13 11 12l1.500-3-4-2-2 1.500c-1.500-1-3-3-3.500-4.500l1.500-2-1.500-4z" fill="#2fae4e" />
      </svg>
    ),
  },
  {
    el: (
      <svg viewBox="0 0 48 45" className="h-[45px] w-[48px]">
        <defs><linearGradient id="sp" x2="0" y2="1"><stop stopColor="#c4cacf" /><stop offset="1" stopColor="#7c8289" /></linearGradient></defs>
        <rect width="48" height="45" rx="2" fill="url(#sp)" />
        <circle cx="24" cy="22.500" r="19.500" fill="#2f3235" />
        <g stroke="#d3d6d8" strokeWidth="1.800">{gearTeeth.map((a) => <path key={a} d="M24 5v4" transform={`rotate(${a} 24 22.500)`} />)}</g>
        <circle cx="24" cy="22.500" r="13" fill="#55585c" stroke="#c9cccf" strokeWidth="2.500" />
        <path d="M24 22.500h12M24 22.500L18 12M24 22.500L18 33" stroke="#c5c9cc" strokeWidth="3" />
        <circle cx="24" cy="22.500" r="3" fill="#3b3e42" stroke="#c5c9cc" strokeWidth="1.500" />
      </svg>
    ),
  },
  {
    running: true,
    el: (
      <svg viewBox="0 0 50 50" className="size-[49px]">
        <circle cx="25" cy="25" r="25" fill="#2bc65d" />
        <path d="M10 17.500c11-3 22-2 31.500 3M11.500 26c9-2.500 19-1.500 27 3M13 34c8-2 16-1 22.500 2.500" fill="none" stroke="#111a14" strokeWidth="4" strokeLinecap="round" />
      </svg>
    ),
  },
  {
    el: (
      <OfficeIcon letter="W" dark="#2b5ba8" light="#4a82cf">
        <path d="M29 11h16M29 16h16M29 21h16M29 26h16M29 31h16M29 36h16M29 40h12" stroke="#3c5577" strokeWidth="1.800" />
      </OfficeIcon>
    ),
  },
  {
    running: true,
    el: (
      <OfficeIcon letter="X" dark="#1f6e43" light="#3c9264">
        <path d="M30 11h16v4H30z" fill="#333" />
        <path d="M30 17h16v23H30z" fill="#3a9062" />
        <path d="M29 22h18M29 28h18M29 34h18M38 10v31" stroke="#f7f7f7" strokeWidth="1.500" />
      </OfficeIcon>
    ),
  },
  {
    running: true,
    el: (
      <OfficeIcon letter="P" dark="#d14a27" light="#ee7a50">
        <circle cx="36" cy="20" r="7.500" fill="#343434" />
        <path d="M38 18v-7a7 7 0 0 1 7 7z" fill="#dd5a35" />
        <path d="M30 31h15M30 36h15" stroke="#dd5a35" strokeWidth="2" />
      </OfficeIcon>
    ),
  },
  {
    el: (
      <svg viewBox="0 0 56 52" className="h-[51px] w-[55px]">
        <defs><linearGradient id="ml" x2="1" y2=".3"><stop offset=".1" stopColor="#9c2a16" /><stop offset=".5" stopColor="#f08a24" /><stop offset="1" stopColor="#a92c16" /></linearGradient></defs>
        <path d="M0 29l17-8c7-2 10-10 16-18L21 35l-8 4z" fill="#3d86b8" />
        <path d="M17 21c7-2 11-12 17-19L20 36l-8-5z" fill="#215d86" />
        <path d="M38 0c6 8 10 27 18 42-4-5-9-9-13-6-6 5-10 13-18 16-3-6-4-13-9-14C28 33 31 13 38 0z" fill="url(#ml)" />
        <path d="M38 2c2 12-3 33-12 49 6-3 11-11 16-14C43 24 41 10 38 2z" fill="#f7b53d" opacity=".6" />
      </svg>
    ),
  },
  {
    el: <div className="flex h-[51px] w-[53px] items-center justify-center border-[3px] border-[#f3922d] bg-[#2e1a08] pb-1 font-['Open_Sans',sans-serif] text-[29px] font-bold tracking-tight text-[#f3922d]">Ai</div>,
  },
];

function Dock() {
  return (
    <div className="flex h-[72px] shrink-0 bg-[#081323] pl-[201px]">
      <div className="mt-[1px] flex w-[870px] rounded-t-[4px] border border-b-0 border-[#263347] bg-gradient-to-b from-[#141c30] to-[#0e1d30] pl-[2px]">
        <div className="grid w-[777px] grid-cols-13">
          {dockIcons.map((d, i) => (
            <div key={i} className="flex flex-col items-center">
              <div className="flex h-[64px] items-center justify-center pl-px">{d.el}</div>
              {d.running && <div className="size-1 rounded-full bg-[#b0b5bd]" />}
            </div>
          ))}
        </div>
        <div className="ml-[13px] mt-2 h-[53px] w-px bg-[#4a5465]" />
        <svg viewBox="0 0 42 50" className="ml-[22px] mt-2 h-[50px] w-[41px]">
          <defs><linearGradient id="tr"><stop stopColor="#7d8186" /><stop offset=".5" stopColor="#63676c" /><stop offset="1" stopColor="#868a8f" /></linearGradient></defs>
          <path d="M1 5l5 39q1 5 15 5t15-5l5-39z" fill="url(#tr)" />
          <ellipse cx="21" cy="5" rx="20" ry="4.500" fill="#50545a" stroke="#8b8f94" />
          <ellipse cx="21" cy="44.500" rx="14" ry="4" fill="#9b9ea2" opacity=".5" />
        </svg>
      </div>
    </div>
  );
}

/* ---------- shared screen ---------- */

function SharedScreen() {
  return (
    <div className="relative ml-[13px] mt-[24px] flex h-[795px] w-[1272px] shrink-0 flex-col overflow-hidden bg-[#0a1424] font-[Inter,sans-serif]">
      <MenuBar />
      <div className="flex h-[700px] w-[1271px] shrink-0 flex-col overflow-hidden rounded-b-[6px]">
        <TitleBar />
        <Ribbon />
        <FormulaBar />
        <Sheet />
        <SheetTabs />
        <StatusBar />
      </div>
      <Dock />

      {/* tooltip */}
      <div className="absolute left-[296px] top-[174px] z-30 flex h-[20px] w-[77px] items-center justify-center border border-[#dcdcde] bg-[#f4f4f5] text-[11px] text-[#3c3c3e] shadow-sm">Formula Bar</div>

      {/* mouse pointer */}
      <svg viewBox="0 0 16 16" className="absolute left-[404px] top-[394px] z-30 size-4" fill="#fff" stroke="#333" strokeWidth="1.300">
        <path d="M6.300 1.500h3.400v4.800h4.800v3.400H9.700v4.800H6.300V9.700H1.500V6.300h4.800z" />
      </svg>

      {/* sharing notice */}
      <div className="absolute left-[440px] top-[672px] z-30 flex h-[42px] w-[392px] items-center bg-[#313132] text-[11.900px] text-[#ececec] shadow-[0_1px_5px_rgba(0,0,0,0.5)]">
        <div className="ml-[10px] flex gap-[3px]"><div className="h-[11px] w-[1.500px] bg-[#ddd]" /><div className="h-[11px] w-[1.500px] bg-[#ddd]" /></div>
        <span className="ml-[10px] w-[222px] whitespace-nowrap text-[11.400px]">us.bbcollab.com is sharing your screen.</span>
        <div className="flex h-[32px] w-[99px] items-center justify-center rounded-[3px] bg-[#7aa9f9] text-[11.300px] font-medium text-[#2d3d5c]">Stop sharing</div>
        <span className="ml-[10px] text-[#84aef0]">Hide</span>
      </div>

      {/* zoom control */}
      <div className="absolute left-[2px] top-[3px] z-30 flex size-[65px] items-center justify-center rounded-full bg-[#151515]/65">
        <svg viewBox="0 0 37 37" className="mb-[1px] ml-[1px] size-[37px]" fill="none" stroke="#fff" strokeWidth="1.500">
          <path d="M14 31.500H1V1h34.500v28M6 9h24M6 15h8M6 21h5" />
          <circle cx="22" cy="23" r="9" />
          <path d="M28.500 29.500L35.500 36" />
        </svg>
      </div>
      <svg viewBox="0 0 5 10" className="absolute left-[58px] top-[30px] z-40 h-[10px] w-[5px]" fill="#fff"><path d="M0 0l5 5-5 5z" /></svg>
    </div>
  );
}

/* ---------- page ---------- */

function ChatPreview() {
  return (
    <aside className="flex w-16 shrink-0 flex-col bg-black pt-[582px] font-['Open_Sans',sans-serif]">
      <div className="flex h-[43px] w-[40px] items-center justify-end rounded-tr-[4px] bg-[#363636] pr-[13px] pt-px text-[13.500px] text-[#f2f2f2]">anks</div>
      <div className="flex h-[48px] w-[40px] items-start justify-end whitespace-nowrap pt-[8px] text-[12px] leading-[18px] text-[#9a9a9a]">4:16 PM</div>
      <div className="flex h-[43px] w-[40px] items-center justify-end rounded-tr-[4px] bg-[#363636] pr-[13px] pt-px text-[13.500px] text-[#f2f2f2]">own</div>
      <div className="flex h-[48px] w-[40px] items-start justify-end whitespace-nowrap pt-[8px] text-[12px] leading-[18px] text-[#9a9a9a]">5:49 PM</div>
    </aside>
  );
}

export default function App() {
  return (
    <div className="flex h-[936px] w-[1389px] overflow-hidden bg-white">
      <ChatPreview />
      <main className="flex w-[1299px] shrink-0 flex-col border-l-2 border-[#2a2f35] bg-[#262626]">
        <header className="flex h-[49px] shrink-0 items-start">
          <div className="-mt-4 flex h-[65px] w-20 items-center justify-center rounded-r-full border-b-2 border-r-2 border-[#c9c9c9] bg-black pl-4">
            <div className="flex w-9 flex-col gap-[7.500px]">
              <div className="h-[1.500px] bg-white" />
              <div className="h-[1.500px] bg-white" />
              <div className="h-[1.500px] bg-white" />
            </div>
          </div>
          <h1 className="ml-[25px] whitespace-nowrap font-['Open_Sans',sans-serif] text-[21px] leading-[32px] text-white">Ryan Preusse is sharing an application.</h1>
        </header>
        <SharedScreen />
      </main>
      <div className="flex w-[26px] shrink-0 flex-col">
        <Gap className="h-[44px]" />
        <div className="h-[2px] bg-[#cfcfcf]" />
        <div className="h-[71px] border-l-[6px] border-[#d2d2d2] bg-[#f7f7f7]" />
        <Gap className="h-[320px]" />
        <div className="h-[258px] border-l-[6px] border-[#22d9ff] bg-[#e9fbff]" />
        <Gap className="h-[126px]" />
        <div className="h-[97px] border-l-[6px] border-[#22d9ff] bg-[#e9fbff]" />
      </div>
    </div>
  );
}
